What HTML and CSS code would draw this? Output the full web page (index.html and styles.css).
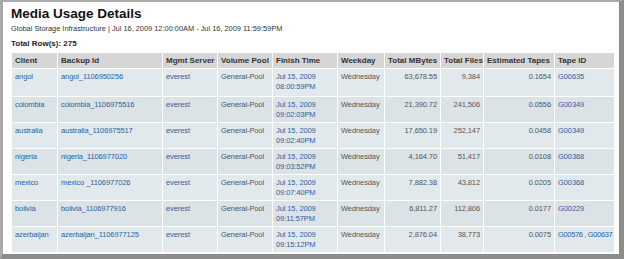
FILE: index.html
```html
<!DOCTYPE html>
<html>
<head>
<meta charset="utf-8">
<link rel="stylesheet" href="styles.css">
</head>
<body>
<div class="frame">
  <h1 class="title">Media Usage Details</h1>
  <div class="subtitle">Global Storage Infrastructure | Jul 16, 2009 12:00:00AM - Jul 16, 2009 11:59:59PM</div>
  <div class="total">Total Row(s): 275</div>
  <table class="grid">
    <colgroup>
      <col class="c1"><col class="c2"><col class="c3"><col class="c4"><col class="c5">
      <col class="c6"><col class="c7"><col class="c8"><col class="c9"><col class="c10">
    </colgroup>
    <thead>
      <tr>
        <th>Client</th><th>Backup Id</th><th>Mgmt Server</th><th>Volume Pool</th><th>Finish Time</th>
        <th>Weekday</th><th>Total MBytes</th><th>Total Files</th><th>Estimated Tapes</th><th>Tape ID</th>
      </tr>
    </thead>
    <tbody>
      <tr class="odd first">
        <td><a>angol</a></td><td><a>angol_1106950256</a></td><td><a>everest</a></td><td>General-Pool</td>
        <td><a>Jul 15, 2009<br>08:00:59PM</a></td><td>Wednesday</td><td class="r">63,678.55</td><td class="r">9,384</td><td class="r">0.1654</td><td><a>G00635</a></td>
      </tr>
      <tr class="even">
        <td><a>colombia</a></td><td><a>colombia_1106975516</a></td><td><a>everest</a></td><td>General-Pool</td>
        <td><a>Jul 15, 2009<br>09:02:03PM</a></td><td>Wednesday</td><td class="r">21,390.72</td><td class="r">241,506</td><td class="r">0.0556</td><td><a>G00349</a></td>
      </tr>
      <tr class="odd">
        <td><a>australia</a></td><td><a>australia_1106975517</a></td><td><a>everest</a></td><td>General-Pool</td>
        <td><a>Jul 15, 2009<br>09:02:40PM</a></td><td>Wednesday</td><td class="r">17,650.19</td><td class="r">252,147</td><td class="r">0.0458</td><td><a>G00349</a></td>
      </tr>
      <tr class="even">
        <td><a>nigeria</a></td><td><a>nigeria_1106977020</a></td><td><a>everest</a></td><td>General-Pool</td>
        <td><a>Jul 15, 2009<br>09:03:52PM</a></td><td>Wednesday</td><td class="r">4,164.70</td><td class="r">51,417</td><td class="r">0.0108</td><td><a>G00368</a></td>
      </tr>
      <tr class="odd">
        <td><a>mexico</a></td><td><a>mexico _1106977026</a></td><td><a>everest</a></td><td>General-Pool</td>
        <td><a>Jul 15, 2009<br>09:07:40PM</a></td><td>Wednesday</td><td class="r">7,882.38</td><td class="r">43,812</td><td class="r">0.0205</td><td><a>G00368</a></td>
      </tr>
      <tr class="even">
        <td><a>bolivia</a></td><td><a>bolivia_1106977916</a></td><td><a>everest</a></td><td>General-Pool</td>
        <td><a>Jul 15, 2009<br>09:11:57PM</a></td><td>Wednesday</td><td class="r">6,811.27</td><td class="r">112,806</td><td class="r">0.0177</td><td><a>G00229</a></td>
      </tr>
      <tr class="odd">
        <td><a>azerbaijan</a></td><td><a>azerbaijan_1106977125</a></td><td><a>everest</a></td><td>General-Pool</td>
        <td><a>Jul 15, 2009<br>09:15:12PM</a></td><td>Wednesday</td><td class="r">2,876.04</td><td class="r">38,773</td><td class="r">0.0075</td><td class="tight"><a>G00576</a> , <a>G00637</a></td>
      </tr>
    </tbody>
  </table>
</div>
</body>
</html>
```
FILE: styles.css
```css
html, body {
  margin: 0;
  padding: 0;
  background: #ffffff;
}
body {
  font-family: "Liberation Sans", Arial, sans-serif;
  color: #444;
}
.frame {
  box-sizing: border-box;
  width: 624px;
  height: 259px;
  border-top: 2px solid #a9a9a9;
  border-left: 3px solid #a9a9a9;
  border-right: 5px solid #8c8c8c;
  border-bottom: 5px solid #8c8c8c;
  padding: 4px 6px 0 8px;
  background: #fff;
}
.title {
  margin: 0;
  font-size: 13.5px;
  line-height: 16px;
  font-weight: bold;
  color: #111;
}
.subtitle {
  margin-top: 2px;
  font-size: 7.4px;
  line-height: 9px;
  color: #333;
}
.total {
  margin-top: 6px;
  font-size: 8px;
  line-height: 10px;
  font-weight: bold;
  color: #222;
}
.grid {
  margin-top: 3px;
  border-collapse: collapse;
  table-layout: fixed;
  width: 603px;
  font-size: 7.5px;
  line-height: 10px;
}
.c1 { width: 46px; }
.c2 { width: 105px; }
.c3 { width: 55px; }
.c4 { width: 55px; }
.c5 { width: 65px; }
.c6 { width: 47px; }
.c7 { width: 56px; }
.c8 { width: 43px; }
.c9 { width: 71px; }
.c10 { width: 60px; }
.grid th, .grid td {
  border: 1px solid #ffffff;
  padding: 0 3px;
  text-align: left;
  vertical-align: top;
  white-space: nowrap;
  overflow: hidden;
}
.grid th {
  background: #d6d6d6;
  color: #333;
  font-size: 8px;
  font-weight: bold;
  height: 15px;
  vertical-align: middle;
}
.grid td {
  padding-top: 3px;
  padding-bottom: 2px;
  color: #555;
  letter-spacing: -0.1px;
}
.grid tr.first td { padding-bottom: 4px; }
.grid td.r { text-align: right; }
.grid td.tight { letter-spacing: -0.35px; padding-right: 0; }
.grid tr.odd td { background: #e2e9ec; }
.grid tr.even td { background: #dbe3e7; }
.grid a {
  color: #2a62a0;
  text-decoration: none;
}
```
